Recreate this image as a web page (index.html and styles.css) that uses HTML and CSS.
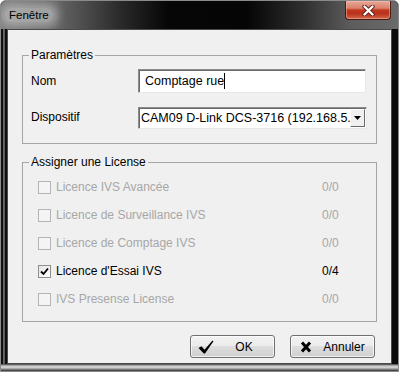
FILE: index.html
```html
<!DOCTYPE html>
<html lang="fr">
<head>
  <meta charset="UTF-8">
  <title>Fenêtre</title>
  <link rel="stylesheet" href="styles.css">
</head>
<body>

<div class="window">
  <div class="titlebar">
    <span class="title">Fenêtre</span>
    <div class="close-btn">
      <svg width="13" height="11" viewBox="0 0 13 11">
        <path d="M2.5 1.5 L10.5 9.5 M10.5 1.5 L2.5 9.5" stroke="#5a2014" stroke-width="4.2" stroke-linecap="round"/>
        <path d="M2.5 1.5 L10.5 9.5 M10.5 1.5 L2.5 9.5" stroke="#fff" stroke-width="2.4" stroke-linecap="round"/>
      </svg>
    </div>
  </div>

  <div class="frame">
    <div class="client">

      <fieldset class="group group-params">
        <legend>Paramètres</legend>
        <div class="field-row row-name">
          <label class="field-label">Nom</label>
          <div class="textbox">Comptage rue<span class="caret"></span></div>
        </div>
        <div class="field-row row-device">
          <label class="field-label">Dispositif</label>
          <div class="combo">
            <span class="combo-text">CAM09 D-Link DCS-3716 (192.168.5.1)</span>
            <span class="combo-btn">
              <svg width="7" height="4" viewBox="0 0 7 4"><path d="M0 0 H7 L3.5 4 Z" fill="#000"/></svg>
            </span>
          </div>
        </div>
      </fieldset>

      <fieldset class="group group-license">
        <legend>Assigner une License</legend>
        <div class="license-row disabled">
          <span class="checkbox"></span>
          <span class="license-name">Licence IVS Avancée</span>
          <span class="license-count">0/0</span>
        </div>
        <div class="license-row disabled">
          <span class="checkbox"></span>
          <span class="license-name">Licence de Surveillance IVS</span>
          <span class="license-count">0/0</span>
        </div>
        <div class="license-row disabled">
          <span class="checkbox"></span>
          <span class="license-name">Licence de Comptage IVS</span>
          <span class="license-count">0/0</span>
        </div>
        <div class="license-row">
          <span class="checkbox checked">
            <svg width="9" height="9" viewBox="0 0 9 9"><path d="M1 4.5 L3.5 7 L8 1.5" stroke="#000" stroke-width="1.8" fill="none"/></svg>
          </span>
          <span class="license-name">Licence d'Essai IVS</span>
          <span class="license-count">0/4</span>
        </div>
        <div class="license-row disabled">
          <span class="checkbox"></span>
          <span class="license-name">IVS Presense License</span>
          <span class="license-count">0/0</span>
        </div>
      </fieldset>

      <div class="actions">
        <button class="btn">
          <span class="btn-icon">
            <svg width="16" height="14" viewBox="0 0 16 14"><path d="M0.5 8 L3.5 6.2 L6.5 9.8 L14.5 0.5 L15.5 1.3 L7 13.5 L5.8 13.5 Z" fill="#000"/></svg>
          </span>
          <span class="btn-text">OK</span>
        </button>
        <button class="btn">
          <span class="btn-icon">
            <svg width="12" height="12" viewBox="0 0 12 12"><path d="M2 1.5 L10 10.5 M10 1.5 L2 10.5" stroke="#000" stroke-width="3"/></svg>
          </span>
          <span class="btn-text">Annuler</span>
        </button>
      </div>

    </div>
  </div>
</div>

</body>
</html>
```

FILE: styles.css
```css
body {
  margin: 0;
  padding: 0;
  background-color: #fff;
  font-family: 'Liberation Sans', Arial, sans-serif;
  font-size: 12px;
  color: #000;
}

.window {
  width: 399px;
  height: 372px;
  box-sizing: border-box;
  border: 1px solid #8a8a8a;
  border-radius: 6px 6px 0 0;
  display: flex;
  flex-direction: column;
  overflow: hidden;
  background-color: #0b0b0b;
}

.titlebar {
  height: 28px;
  flex: none;
  display: flex;
  align-items: center;
  padding-left: 4px;
  background: linear-gradient(90deg, #7b7b7b 0, #666 14%, #2a2a2a 30%, #060606 42%, #050505 62%, #2e2e2e 76%, #5c5c5c 88%, #6a6a6a 100%);
}

.title {
  padding: 1px 4px;
  font-size: 11.5px;
  color: #000;
  background-color: rgba(205, 205, 205, 0.55);
  box-shadow: 0 0 8px 5px rgba(205, 205, 205, 0.55);
  border-radius: 6px;
}

.close-btn {
  margin-left: auto;
  margin-right: 7px;
  align-self: flex-start;
  width: 46px;
  height: 19px;
  box-sizing: border-box;
  border: 1px solid #4a1c14;
  border-top: none;
  border-radius: 0 0 4px 4px;
  background: linear-gradient(#e7a999 0, #d9806c 40%, #c2381f 50%, #b9321b 70%, #d4664c 100%);
  box-shadow: inset 0 0 0 1px rgba(255, 200, 180, 0.45);
  display: flex;
  align-items: center;
  justify-content: center;
}

.frame {
  flex: 1;
  display: flex;
  padding: 0 6px 7px 6px;
  background:
    linear-gradient(#3a3a3a 0, #b8b8b8 25%, #dcdcdc 45%, #8a8a8a 75%, #2a2a2a 100%) left bottom / 100% 7px no-repeat,
    linear-gradient(90deg, #111 0, #111 2px, #6a6a6a 2px, #555 4px, #0d0d0d 4px) left top / 6px 100% no-repeat,
    #0b0b0b;
}

.client {
  flex: 1;
  display: flex;
  flex-direction: column;
  border: 1px solid #4a4a4a;
  background-color: #f0f0f0;
}

.group {
  margin: 0 14px;
  border: 1px solid #a5a5a5;
  padding: 0 9px 14px 6px;
  min-width: 0;
}

.group legend {
  padding: 0 2px;
  line-height: 15px;
}

.group-params {
  margin-top: 18px;
}

.field-row {
  display: flex;
  align-items: center;
  padding-left: 2px;
}

.row-name {
  margin-top: 6px;
}

.row-device {
  margin-top: 14px;
}

.field-label {
  width: 107px;
  flex: none;
}

.row-device .field-label {
  margin-top: -3px;
}

.textbox {
  width: 228px;
  height: 24px;
  box-sizing: border-box;
  border: 1px solid;
  border-color: #8c8c8c #e8e8e8 #e8e8e8 #8c8c8c;
  box-shadow: inset 1px 1px 0 #6a6a6a;
  background-color: #fff;
  padding: 0 0 0 6px;
  font-size: 12.5px;
  display: flex;
  align-items: center;
}

.caret {
  width: 1px;
  height: 16px;
  background-color: #000;
}

.combo {
  width: 229px;
  height: 22px;
  box-sizing: border-box;
  border: 1px solid;
  border-color: #8c8c8c #e8e8e8 #e8e8e8 #8c8c8c;
  box-shadow: inset 1px 1px 0 #6a6a6a;
  background-color: #fff;
  display: flex;
  align-items: center;
  padding: 1px 1px 1px 2px;
}

.combo-text {
  flex: 1;
  overflow: hidden;
  white-space: nowrap;
  font-size: 12.5px;
}

.combo-btn {
  width: 15px;
  height: 18px;
  box-sizing: border-box;
  flex: none;
  background-color: #f0f0f0;
  border: 1px solid;
  border-color: #fff #6a6a6a #6a6a6a #fff;
  display: flex;
  align-items: center;
  justify-content: center;
}

.group-license {
  margin-top: 11px;
  padding-top: 3px;
  padding-bottom: 8px;
}

.license-row {
  height: 28px;
  display: flex;
  align-items: center;
  padding-left: 9px;
}

.checkbox {
  width: 13px;
  height: 13px;
  box-sizing: border-box;
  flex: none;
  border: 1px solid #8e8f8f;
  background: linear-gradient(135deg, #e4e4e4, #fff);
  display: flex;
  align-items: center;
  justify-content: center;
}

.disabled .checkbox {
  border-color: #b4b4b4;
  background: #f4f4f4;
}

.license-name {
  margin-left: 5px;
  flex: 1;
}

.license-count {
  width: 30px;
  margin-right: 15px;
}

.disabled {
  color: #a7a7a7;
}

.actions {
  display: flex;
  justify-content: flex-end;
  gap: 15px;
  margin-top: 13px;
  padding-right: 16px;
}

.btn {
  width: 85px;
  height: 23px;
  box-sizing: border-box;
  padding: 0 0 0 7px;
  border: 1px solid #707070;
  border-radius: 3px;
  background: linear-gradient(#f2f2f2 0, #ebebeb 50%, #dddddd 50%, #cfcfcf 100%);
  box-shadow: inset 0 0 0 1px rgba(255, 255, 255, 0.7);
  font-family: 'Liberation Sans', Arial, sans-serif;
  font-size: 12px;
  color: #000;
  display: flex;
  align-items: center;
}

.btn-icon {
  width: 16px;
  display: flex;
  justify-content: center;
}

.btn-text {
  flex: 1;
  text-align: center;
}
```
